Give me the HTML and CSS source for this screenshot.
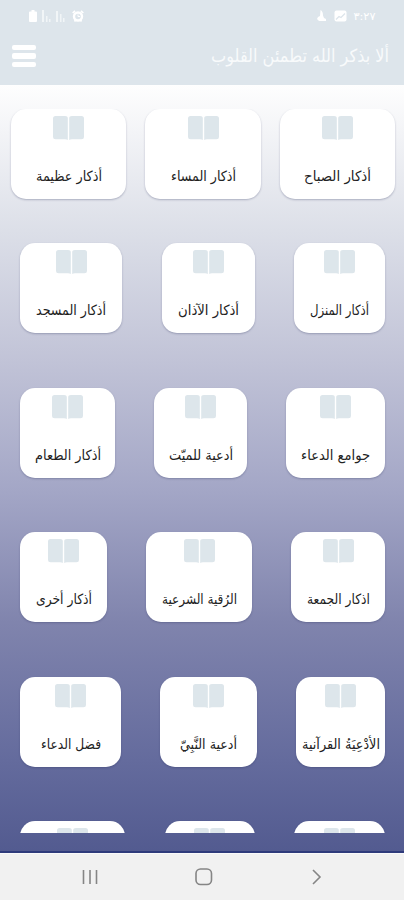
FILE: index.html
```
<!DOCTYPE html>
<html lang="ar" dir="rtl">
<head>
<meta charset="utf-8">
<title>أذكار</title>
<link rel="stylesheet" href="styles.css">
</head>
<body>
<header class="top">
  <div class="status">
    <div class="status-group">
      <svg class="clock" width="25" height="16"><text x="12.5" y="12" textLength="22" lengthAdjust="spacingAndGlyphs" direction="ltr">٣:٢٧</text></svg>
      <svg width="13" height="12" viewBox="0 0 13 12"><rect x=".5" y=".5" width="12" height="11" rx="2" fill="#fff"/><path d="M2 9.500 5 6.500l2 1 4-4" fill="none" stroke="#dde5eb" stroke-width="1.300"/></svg>
      <svg class="moon" width="9" height="12" viewBox="0 0 9 12"><path d="M3.500 0Q6 1 6 5.500L7 8l2 1v2H2L0 9l1-2 2-1z" fill="#fff"/></svg>
    </div>
    <div class="status-group">
      <svg width="12" height="12" viewBox="0 0 12 12"><circle cx="6" cy="6.500" r="4" fill="none" stroke="#fff" stroke-width="2.400"/><path d="M.7 3 3 .8M11.300 3 9 .8M2.500 11.500l1-1.500M9.500 11.500l-1-1.500" stroke="#fff" stroke-width="1.700"/><path d="M6 4.500v2h2" fill="none" stroke="#fff"/></svg>
      <svg class="signals" width="25" height="12" viewBox="0 0 25 12"><g fill="#fff" opacity=".6"><path d="M0 0h2v12H0zM4 6h1.500v6H4zM7 9h1.500v3H7zM14 1h2v11h-2zM18 4h1.500v8H18zM21 8h1.500v4H21z"/></g></svg>
      <svg width="8" height="12" viewBox="0 0 8 12"><path d="M2.500 0h3v1.500H7q1 0 1 1V11q0 1-1 1H1q-1 0-1-1V2.500q0-1 1-1h1.500z" fill="#fff"/></svg>
    </div>
  </div>
  <div class="bar">
    <svg class="title" width="182" height="40"><text x="91" y="26" textLength="178" lengthAdjust="spacingAndGlyphs">ألا بذكر الله تطمئن القلوب</text></svg>
    <div class="menu"><i></i><i></i><i></i></div>
  </div>
</header>
<main class="list" id="list"></main>
<nav class="nav">
  <svg width="10" height="16" viewBox="0 0 10 16"><path d="m1 1 7 7-7 7"/></svg>
  <svg class="home" width="18" height="18" viewBox="0 0 18 18"><rect x="1" y="1" width="15.500" height="15.500" rx="4.500"/></svg>
  <svg width="16" height="16" viewBox="0 0 16 16"><path d="M1.500 1v14M8 1v14M14.500 1v14"/></svg>
</nav>
<script src="app.js"></script>
</body>
</html>
```
FILE: styles.css
```
* { box-sizing: border-box; }
body {
  margin: 0;
  width: 404px;
  height: 900px;
  overflow: hidden;
  display: flex;
  flex-direction: column;
  font-family: "DejaVu Sans", "Noto Sans Arabic", sans-serif;
  background: #f1f1f1;
}
svg { display: block; flex: none; overflow: visible; }
text { text-anchor: middle; }
.top { height: 85px; background: #dde5eb; color: #fff; }
.status {
  height: 31px;
  padding: 0 27px 0 29px;
  display: flex;
  justify-content: space-between;
  align-items: center;
}
.status-group { display: flex; align-items: center; gap: 5px; }
.clock text { font-size: 11px; fill: #fff; }
.moon { margin-right: 3px; }
.signals { direction: ltr; }
.bar {
  height: 50px;
  padding: 0 13px 0 12px;
  display: flex;
  justify-content: space-between;
  align-items: center;
}
.title text { font-size: 18px; fill: #f8fafb; }
.menu { width: 24px; display: flex; flex-direction: column; gap: 3px; }
.menu i { height: 5.500px; border-radius: 2px; background: #fff; }
.list {
  height: 768px;
  padding: 24px 19px 20px 20px;
  background: linear-gradient(#fefefe 0%, #dcdfe8 19%, #c1c3d7 36%, #a3a6c6 53%, #8084ad 70%, #646b9d 88%, #535b90 99.700%, #2f3b7b 99.800%);
}
.rows { height: 724px; overflow: hidden; margin: 0 -19px 0 -20px; padding: 0 19px 0 20px; }
.row { display: flex; justify-content: space-between; height: 90px; margin-bottom: 54.500px; }
.row:first-child { margin: 0 -10px 44px -9px; }
.card {
  height: 90px;
  padding-top: 7px;
  display: flex;
  flex-direction: column;
  align-items: center;
  border-radius: 15px;
  background: #fff;
  box-shadow: 0 1px 2px rgba(40, 45, 90, .3);
}
.book { fill: #dde6eb; }
.label { margin-top: 19px; }
.label text { font-size: 14px; fill: #222; }
.nav {
  height: 47px;
  padding: 0 82px;
  display: flex;
  justify-content: space-between;
  align-items: center;
  border-top: 1px solid #fafafa;
}
.nav svg { fill: none; stroke: #858585; stroke-width: 1.600; }
.nav .home { margin-right: 2px; }
```
FILE: app.js
```
// Each entry: label, card width, label width.
const rows = [
  [["أذكار الصباح", 115, 67], ["أذكار المساء", 116, 65], ["أذكار عظيمة", 115, 66]],
  [["أذكار المنزل", 91, 59], ["أذكار الآذان", 93, 61], ["أذكار المسجد", 102, 70]],
  [["جوامع الدعاء", 99, 69], ["أدعية للميّت", 93, 64], ["أذكار الطعام", 95, 66]],
  [["اذكار الجمعة", 94, 63], ["الرُقية الشرعية", 106, 75], ["أذكار أخرى", 87, 56]],
  [["الأدْعِيَةُ القرآنية", 89, 78], ["أدعية النَّبِيّ", 97, 57], ["فضل الدعاء", 101, 60]],
  [["", 91, 0], ["", 90, 0], ["", 105, 0]]
];
const book = '<svg class="book" width="31" height="25" viewBox="0 0 31 25"><path d="M2.500 0H12q2.800 0 2.800 2v22q-1-.7-2.800-.7H2.500Q0 23.300 0 21V2.500Q0 0 2.500 0zM19 0h9.500Q31 0 31 2.500V21q0 2.300-2.500 2.300H19q-1.800 0-2.800.7V2q0-2 2.800-2z"/></svg>';
document.getElementById("list").innerHTML = '<div class="rows">' + rows.map(row =>
  '<div class="row">' + row.map(([name, width, textWidth]) =>
    `<div class="card" style="width:${width}px">${book}` +
    (name ? `<svg class="label" width="${textWidth}" height="32"><text x="${textWidth / 2}" y="21" textLength="${textWidth}" lengthAdjust="spacingAndGlyphs">${name}</text></svg>` : "") +
    "</div>").join("") + "</div>").join("") + "</div>";
```
